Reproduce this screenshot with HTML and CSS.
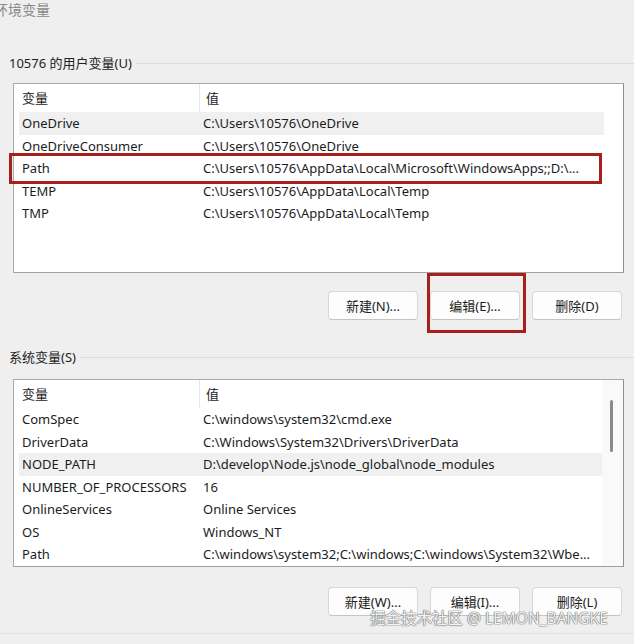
FILE: index.html
```html
<!DOCTYPE html>
<html lang="zh-CN">
<head>
<meta charset="utf-8">
<title>环境变量</title>
<link rel="stylesheet" href="styles.css">
</head>
<body>
<div class="page">
  <div class="title">环境变量</div>

  <div class="group group-user">
    <div class="group-head"><span class="group-label">10576 的用户变量(U)</span><span class="group-line"></span></div>
    <div class="list list-user">
      <div class="row head"><span class="c1">变量</span><span class="c2">值</span></div>
      <div class="row hl"><span class="c1">OneDrive</span><span class="c2">C:\Users\10576\OneDrive</span></div>
      <div class="row"><span class="c1">OneDriveConsumer</span><span class="c2">C:\Users\10576\OneDrive</span></div>
      <div class="row"><span class="c1">Path</span><span class="c2">C:\Users\10576\AppData\Local\Microsoft\WindowsApps;;D:\...</span></div>
      <div class="row"><span class="c1">TEMP</span><span class="c2">C:\Users\10576\AppData\Local\Temp</span></div>
      <div class="row"><span class="c1">TMP</span><span class="c2">C:\Users\10576\AppData\Local\Temp</span></div>
      <div class="mark mark-row"></div>
    </div>
    <div class="buttons buttons-user">
      <button class="btn">新建(N)...</button>
      <button class="btn">编辑(E)...</button>
      <button class="btn">删除(D)</button>
      <div class="mark mark-btn"></div>
    </div>
  </div>

  <div class="group group-sys">
    <div class="group-head"><span class="group-label">系统变量(S)</span><span class="group-line"></span></div>
    <div class="list list-sys">
      <div class="row head"><span class="c1">变量</span><span class="c2">值</span></div>
      <div class="row"><span class="c1">ComSpec</span><span class="c2">C:\windows\system32\cmd.exe</span></div>
      <div class="row"><span class="c1">DriverData</span><span class="c2">C:\Windows\System32\Drivers\DriverData</span></div>
      <div class="row hl"><span class="c1">NODE_PATH</span><span class="c2">D:\develop\Node.js\node_global\node_modules</span></div>
      <div class="row"><span class="c1">NUMBER_OF_PROCESSORS</span><span class="c2">16</span></div>
      <div class="row"><span class="c1">OnlineServices</span><span class="c2">Online Services</span></div>
      <div class="row"><span class="c1">OS</span><span class="c2">Windows_NT</span></div>
      <div class="row"><span class="c1">Path</span><span class="c2">C:\windows\system32;C:\windows;C:\windows\System32\Wbe...</span></div>
      <div class="scroll"><div class="thumb"></div></div>
    </div>
    <div class="buttons buttons-sys">
      <button class="btn">新建(W)...</button>
      <button class="btn">编辑(I)...</button>
      <button class="btn">删除(L)</button>
    </div>
  </div>

  <div class="bottom-line"></div>
  <div class="watermark">掘金技术社区 @ LEMON_BANGKE</div>
</div>
</body>
</html>
```

FILE: styles.css
```css
* { box-sizing: border-box; }
html, body {
  margin: 0;
  padding: 0;
  background: #efefef;
}
body {
  font-family: "Noto Sans", "Noto Sans CJK SC", sans-serif;
  font-size: 13px;
  color: #1c1c1c;
  width: 634px;
  height: 644px;
  overflow: hidden;
}
.page {
  position: relative;
  width: 634px;
  height: 644px;
}
.title {
  height: 20px;
  line-height: 20px;
  font-size: 14px;
  color: #8a8a8a;
  margin-left: -6px;
}
.group-head {
  display: flex;
  align-items: center;
  height: 18px;
  padding-left: 9px;
}
.group-label {
  line-height: 18px;
  color: #222;
  white-space: nowrap;
}
.group-line {
  flex: 1;
  height: 1px;
  background: #dcdcdc;
  margin-left: 4px;
}
.group-user { margin-top: 34px; }
.group-sys { margin-top: 28px; }

.list {
  position: relative;
  margin-left: 13px;
  width: 611px;
  background: #fff;
  border: 1px solid #a9a9a9;
  border-right-color: #8e8e8e;
  border-bottom-color: #a0a0a0;
  padding-left: 5px;
}
.list-user { margin-top: 11px; height: 190px; }
.list-sys { margin-top: 13px; height: 188px; }

.row {
  display: flex;
  height: 22.5px;
  line-height: 22.5px;
  width: 585px;
  white-space: nowrap;
}
.row.head {
  height: 28px;
  line-height: 28px;
}
.row.hl { background: #f0f0f0; }
.c1 {
  width: 180px;
  padding-left: 3px;
  overflow: hidden;
}
.c2 {
  flex: 1;
  padding-left: 4px;
  overflow: hidden;
}
.row.head .c2 {
  border-left: 1px solid #e6e6e6;
  padding-left: 6px;
}

.mark {
  position: absolute;
  border: 3px solid #a8201d;
  pointer-events: none;
}
.mark-row {
  left: -5px;
  top: 69px;
  width: 593px;
  height: 31px;
}

.scroll {
  position: absolute;
  right: 0;
  top: 0;
  bottom: 0;
  width: 21px;
  background: #f9f9f9;
}
.thumb {
  position: absolute;
  left: 8px;
  top: 20px;
  width: 3px;
  height: 52px;
  border-radius: 2px;
  background: #8a8a8a;
}

.buttons {
  position: relative;
  display: flex;
  justify-content: flex-end;
  gap: 12px;
  padding-right: 12px;
}
.buttons-user { margin-top: 18px; }
.buttons-sys { margin-top: 20px; }
.btn {
  width: 90px;
  height: 29px;
  padding: 0;
  font-family: inherit;
  font-size: 13px;
  color: #1c1c1c;
  background: #fdfdfd;
  border: 1px solid #d6d6d6;
  border-bottom-color: #c4c4c4;
  border-radius: 4px;
}
.mark-btn {
  left: 427px;
  top: -18px;
  width: 99px;
  height: 60px;
}

.bottom-line {
  margin-top: 17px;
  height: 1px;
  background: #e2e2e2;
}
.watermark {
  position: absolute;
  left: 370px;
  top: 608px;
  font-size: 15.5px;
  line-height: 20px;
  color: #f4f4f4;
  text-shadow: 0 0 1px #6a6a6a, 0 0 1px #6a6a6a, 0 0 1px #6a6a6a;
  white-space: nowrap;
}
```
